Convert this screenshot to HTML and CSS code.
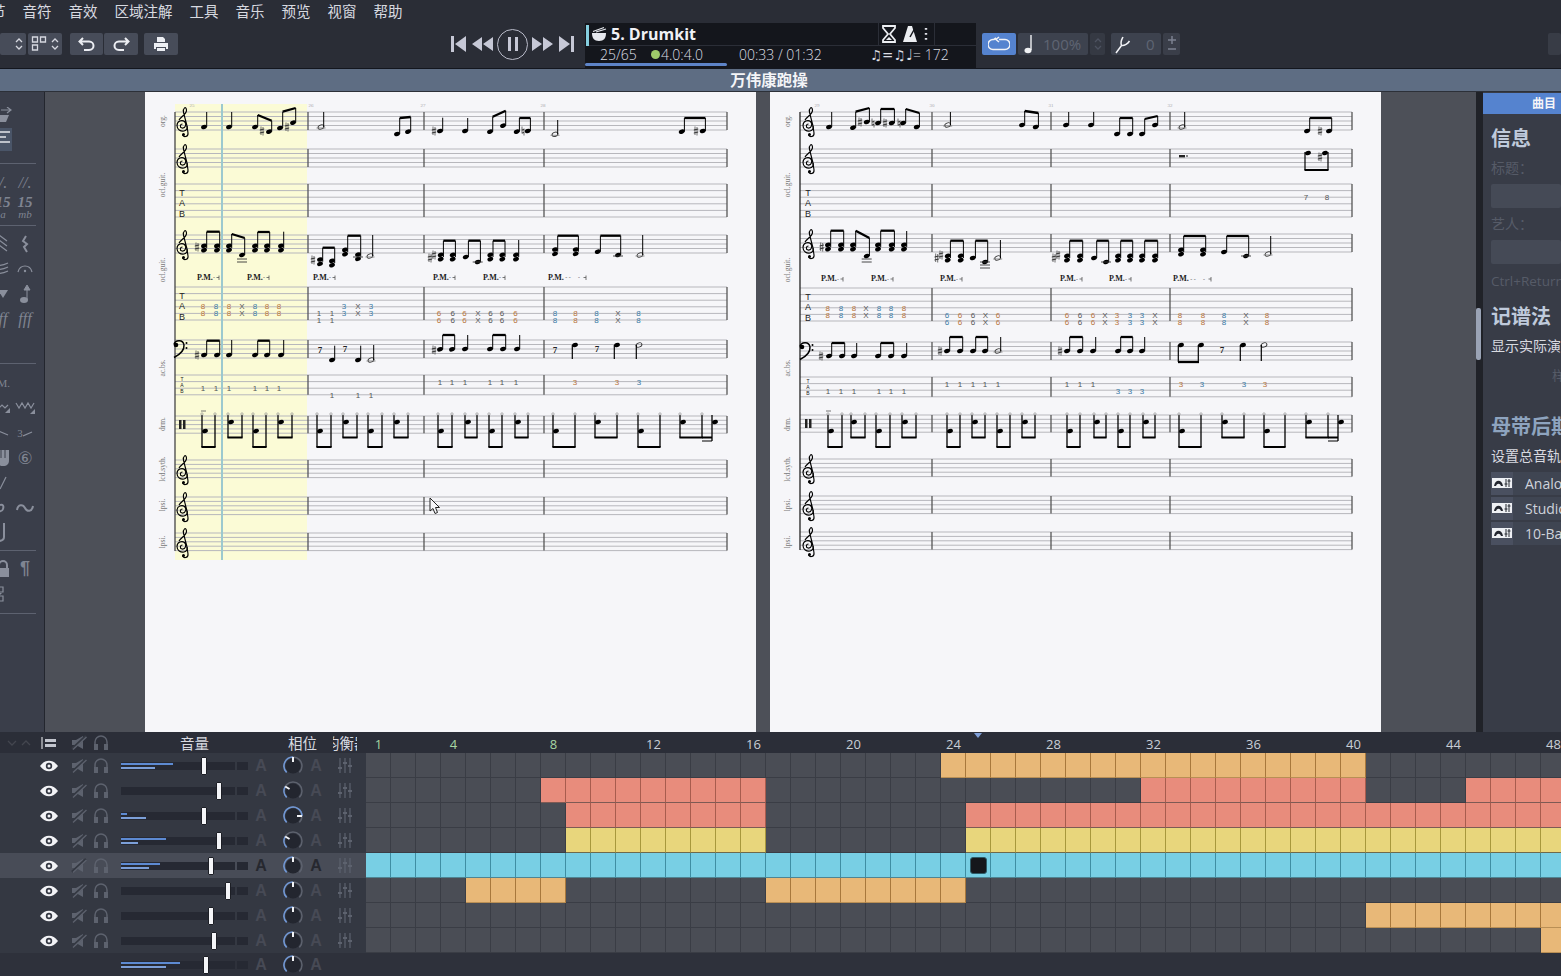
FILE: index.html
```html
<!DOCTYPE html>
<html lang="zh">
<head>
    <meta charset="UTF-8">
    <title>万伟康跑操</title>
    <link rel="stylesheet" href="styles.css">
</head>
<body>
    <nav class="menubar">
        <span>节</span><span>音符</span><span>音效</span><span>区域注解</span><span>工具</span><span>音乐</span><span>预览</span><span>视窗</span><span>帮助</span>
    </nav>

    <header class="toolbar">
        <div class="btn stepper-a">
            <svg width="10" height="16" viewBox="0 0 10 16"><path d="M2 6l3-3 3 3M2 10l3 3 3-3" class="ico-line"/></svg>
        </div>
        <div class="btn stepper-b">
            <svg width="18" height="18" viewBox="0 0 18 18"><path d="M1.5 2h5v5h-5zM9.5 2h5v5h-5zM1.5 10h5v5h-5z" class="ico-line"/></svg>
            <svg width="10" height="16" viewBox="0 0 10 16"><path d="M2 6l3-3 3 3M2 10l3 3 3-3" class="ico-line"/></svg>
        </div>
        <div class="btn-pair">
            <div class="btn undo"><svg width="18" height="16" viewBox="0 0 18 16"><path d="M5 2L1.5 5.5 5 9M2 5.5h9c6 0 6 8.500 0 8.500H6" class="ico-thick"/></svg></div>
            <div class="btn redo"><svg width="18" height="16" viewBox="0 0 18 16"><path d="M13 2l3.500 3.500L13 9M16 5.500H7c-6 0-6 8.500 0 8.500h5" class="ico-thick"/></svg></div>
        </div>
        <div class="btn print">
            <svg width="16" height="16" viewBox="0 0 16 16"><path d="M4 1h6l2 2v3H4zM1 7h14v6h-2v-2H3v2H1zM4 12h8v3H4z" class="ico-fill"/></svg>
        </div>

        <div class="transport">
            <svg width="16" height="18" viewBox="0 0 16 18"><path d="M0 1h3v16H0zM15 1v16L4 9z" class="ico-trans"/></svg>
            <svg width="21" height="18" viewBox="0 0 21 18"><path d="M10 2v14L0 9zM21 2v14L11 9z" class="ico-trans"/></svg>
            <div class="pause"><i></i><i></i></div>
            <svg width="21" height="18" viewBox="0 0 21 18"><path d="M0 2v14l10-7zM11 2v14l10-7z" class="ico-trans"/></svg>
            <svg width="16" height="18" viewBox="0 0 16 18"><path d="M13 1h3v16h-3zM1 1v16l11-8z" class="ico-trans"/></svg>
        </div>

        <div class="lcd">
            <div class="lcd-top">
                <svg class="drum" width="16" height="16" viewBox="0 0 16 16"><path d="M1 7h14c0 5-2 8-7 8s-7-3-7-8z" fill="#e6e8ee"/><path d="M2 5.500l11-4M5 6l10-3" stroke="#e6e8ee" stroke-width="1.200"/></svg>
                <span class="track-name">5. Drumkit</span>
                <div class="lcd-icons">
                    <svg width="14" height="18" viewBox="0 0 14 18"><path d="M1 1h12v2L8 9l5 6v2H1v-2l5-6-5-6z" fill="none" stroke="#eceef2" stroke-width="1.800"/><path d="M4 15l3-3 3 3z" fill="#eceef2"/></svg>
                    <svg width="16" height="18" viewBox="0 0 16 18"><path d="M6 1h4l5 16H1z" fill="#eceef2"/><path d="M8 12L13 3" stroke="#14161c" stroke-width="1.500"/></svg>
                    <svg width="4" height="14" viewBox="0 0 4 14"><path d="M2 1v1.800M2 6v1.800M2 11v1.800" stroke="#dfe1e8" stroke-width="2.400"/></svg>
                </div>
            </div>
            <div class="lcd-bottom">
                <span class="lcd-pos">25/65</span>
                <span class="lcd-dot"></span>
                <span class="lcd-sig">4.0:4.0</span>
                <span class="lcd-time">00:33 / 01:32</span>
                <span class="lcd-swing">♫=♫</span>
                <span class="lcd-tempo"><b>♩</b>= 172</span>
            </div>
            <div class="lcd-progress"></div>
        </div>

        <div class="btn loop">
            <svg width="22" height="16" viewBox="0 0 22 16"><path d="M8 2a6 6 0 0 0-2 1.500H5a5 5 0 0 0 0 10h12a5 5 0 0 0 0-10h-6M11 1L8 3.500 11 6" class="ico-line white"/></svg>
        </div>
        <div class="btn speed">
            <svg width="10" height="20" viewBox="0 0 10 20"><ellipse cx="4" cy="16.500" rx="3.500" ry="2.800" fill="#f0f1f4"/><path d="M7 16V1" stroke="#f0f1f4" stroke-width="1.400"/></svg>
            <span>100%</span>
        </div>
        <div class="btn speed-step">
            <svg width="10" height="14" viewBox="0 0 10 14"><path d="M2 5l3-3 3 3M2 9l3 3 3-3" class="ico-line dim"/></svg>
        </div>
        <div class="btn tune">
            <svg width="18" height="20" viewBox="0 0 18 20"><path d="M1 19l5.500-7.500M6.500 11.500C5 8 7 5 8 3M6.500 11.500c3 .5 6.500-2 8-4.500" class="ico-line white"/></svg>
            <span>0</span>
        </div>
        <div class="btn tune-step">
            <svg width="10" height="18" viewBox="0 0 10 18"><path d="M1 5h8M5 1v8M1 14h8" stroke="#7c8190" stroke-width="1.500"/></svg>
        </div>
        <div class="btn far-right"></div>
    </header>

    <div class="titlebar">万伟康跑操</div>

    <div class="main">
        <aside class="palette">
            <div class="pal-sec first">
                <div class="pal-row"><svg width="20" height="16" viewBox="0 0 20 16"><path d="M8 3h10M14 0l4 3-4 3" class="pal-line"/><path d="M4 8h12l-3 7H6z" fill="#8a8f9c"/></svg><i></i></div>
                <div class="pal-row sel"><svg width="20" height="18" viewBox="0 0 20 18"><path d="M2 4h16M2 9h12M2 14h16" stroke="#e4e6ec" stroke-width="1.500"/></svg></div>
            </div>
            <div class="pal-sec s2">
                <div class="pal-row"><span class="pal-serif">/.</span><span class="pal-serif">//.</span></div>
                <div class="pal-row"><span class="pal-serif bold stack">15<small>a</small></span><span class="pal-serif bold stack">15<small>mb</small></span></div>
            </div>
            <div class="pal-sec s3">
                <div class="pal-row"><svg width="14" height="18" viewBox="0 0 14 18"><path d="M3 0l8 6M3 5l8 6M3 10l8 6M3 0v16" class="pal-line"/></svg><svg width="10" height="18" viewBox="0 0 10 18"><path d="M6 1L3 6l4 3-3 3 3 5" class="pal-line thick"/></svg></div>
                <div class="pal-row"><svg width="14" height="14" viewBox="0 0 14 14"><path d="M0 3c4 1 8 0 12-2M0 7c4 1 8 0 12-2M0 11c4 1 8 0 12-2" class="pal-line"/></svg><svg width="16" height="10" viewBox="0 0 16 10"><path d="M1 8c2-8 12-8 14 0" class="pal-line"/><circle cx="8" cy="7" r="1.200" fill="#8a8f9c"/></svg></div>
                <div class="pal-row"><svg width="12" height="12" viewBox="0 0 12 12"><path d="M1 2h10L6 10z" fill="#8a8f9c"/></svg><svg width="12" height="20" viewBox="0 0 12 20"><ellipse cx="5" cy="16" rx="4" ry="3" fill="#8a8f9c"/><path d="M8 16V4M8 1l3 5H5z" fill="#8a8f9c" stroke="#8a8f9c"/></svg></div>
                <div class="pal-row"><span class="pal-serif ital">ff</span><span class="pal-serif ital">fff</span></div>
            </div>
            <div class="pal-sec s4">
                <div class="pal-row"><span class="pal-serif small">P.M.</span><i></i></div>
                <div class="pal-row"><svg width="14" height="12" viewBox="0 0 14 12"><path d="M0 4l3 2 3-3 3 3 3-3" class="pal-line"/><path d="M14 11l-5 0 5-5z" fill="#8a8f9c"/></svg><svg width="20" height="14" viewBox="0 0 20 14"><path d="M1 2l3 5 3-5 3 5 3-5 3 5 3-5" class="pal-line"/><path d="M20 13h-5l5-5z" fill="#8a8f9c"/></svg></div>
                <div class="pal-row"><svg width="14" height="8" viewBox="0 0 14 8"><path d="M0 1l12 5" class="pal-line"/></svg><span class="pal-three">3<svg width="10" height="6" viewBox="0 0 10 6"><path d="M0 5l9-4" class="pal-line"/></svg></span></div>
                <div class="pal-row"><svg width="14" height="18" viewBox="0 0 14 18"><path d="M1 1h12v10c0 4-2 6-6 6s-6-2-6-6z" fill="#8a8f9c"/><path d="M5 1v8M9 1v8" stroke="#3a3e4a"/></svg><span class="pal-six">⑥</span></div>
                <div class="pal-row"><svg width="10" height="14" viewBox="0 0 10 14"><path d="M8 1L2 13" class="pal-line"/></svg><i></i></div>
                <div class="pal-row"><svg width="14" height="10" viewBox="0 0 14 10"><path d="M1 6c2 3 5 3 6 0s0-5-3-4" class="pal-line thick"/></svg><svg width="18" height="10" viewBox="0 0 18 10"><path d="M1 7c1-6 6-6 8-2s7 4 8-2" class="pal-line thick"/></svg></div>
                <div class="pal-row"><svg width="12" height="22" viewBox="0 0 12 22"><path d="M7 1v14c0 3-3 4-6 4" class="pal-line thick"/></svg><i></i></div>
            </div>
            <div class="pal-sec s5">
                <div class="pal-row"><svg width="14" height="18" viewBox="0 0 14 18"><path d="M3 8V5a4 4 0 0 1 8 0v3" class="pal-line thick"/><path d="M1 8h12v9H1z" fill="#8a8f9c"/></svg><span class="pal-para">¶</span></div>
                <div class="pal-row"><svg width="14" height="16" viewBox="0 0 14 16"><path d="M1 1h6v5H1zM1 10h6v5H1z" class="pal-line"/><path d="M2 7l2 2 2-2z" fill="#8a8f9c"/></svg><i></i></div>
            </div>
        </aside>

        <section class="canvas">
            <div class="page"><svg class="score" id="score1" viewBox="145 92 611 640" width="611" height="640"></svg></div>
            <div class="page"><svg class="score" id="score2" viewBox="770 92 611 640" width="611" height="640"></svg></div>
        </section>

        <div class="vscroll"><div class="vthumb"></div></div>

        <aside class="inspector">
            <div class="tab">曲目</div>
            <h2 class="head-info">信息</h2>
            <div class="lbl dim">标题：</div>
            <div class="field"></div>
            <div class="lbl dim">艺人：</div>
            <div class="field"></div>
            <div class="lbl dim latin">Ctrl+Return</div>
            <h2 class="head-notation">记谱法</h2>
            <div class="lbl">显示实际演奏</div>
            <div class="lbl dim right">样</div>
            <h2 class="head-master">母带后期</h2>
            <div class="lbl">设置总音轨</div>
            <div class="fx-list">
                <div class="fx"><span class="fx-icon"><svg width="20" height="10" viewBox="0 0 20 10"><path d="M0 0h20v10H0z" fill="#eef0f4"/><path d="M2 8c1-7 8-7 9 0h-2c-1-3-4-3-5 0z" fill="#23262f"/><path d="M14 1v8M17 1v8M12.500 6h3M15.500 3h3" stroke="#23262f"/></svg></span><span class="fx-name">Analog</span></div>
                <div class="fx"><span class="fx-icon"><svg width="20" height="10" viewBox="0 0 20 10"><path d="M0 0h20v10H0z" fill="#eef0f4"/><path d="M2 8c1-7 8-7 9 0h-2c-1-3-4-3-5 0z" fill="#23262f"/><path d="M14 1v8M17 1v8M12.500 6h3M15.500 3h3" stroke="#23262f"/></svg></span><span class="fx-name">Studio</span></div>
                <div class="fx"><span class="fx-icon"><svg width="20" height="10" viewBox="0 0 20 10"><path d="M0 0h20v10H0z" fill="#eef0f4"/><path d="M2 8c1-7 8-7 9 0h-2c-1-3-4-3-5 0z" fill="#23262f"/><path d="M14 1v8M17 1v8M12.500 6h3M15.500 3h3" stroke="#23262f"/></svg></span><span class="fx-name">10-Band</span></div>
            </div>
        </aside>
    </div>

    <section class="mixer" id="mixer"></section>

    <script src="script.js"></script>
</body>
</html>
```

FILE: styles.css
```css
* {
    box-sizing: border-box;
}

html, body {
    margin: 0;
    width: 1561px;
    height: 976px;
    overflow: hidden;
}

body {
    display: flex;
    flex-direction: column;
    background: #2a2d36;
    color: #d8dae0;
    font-family: "Noto Sans", "Noto Sans CJK SC", sans-serif;
    font-size: 14px;
}

/* верх */
.menubar {
    height: 22px;
    flex: none;
    display: flex;
    gap: 17px;
    margin-left: -9px;
    font-size: 14.500px;
    line-height: 22px;
    white-space: nowrap;
}

.toolbar {
    height: 46px;
    flex: none;
    display: flex;
    align-items: center;
    padding-bottom: 2px;
    position: relative;
}

.btn {
    height: 22px;
    flex: none;
    display: flex;
    align-items: center;
    justify-content: center;
    background: #474c59;
    border-radius: 2px;
}

.stepper-a { width: 26px; justify-content: flex-end; padding-right: 2px; }
.stepper-b { width: 34px; margin-left: 2px; gap: 1px; }
.btn-pair { display: flex; gap: 1px; margin-left: 8px; }
.undo { width: 33px; }
.redo { width: 34px; }
.print { width: 34px; margin-left: 6px; }

.ico-line { fill: none; stroke: #d6d8e0; stroke-width: 1.300; }
.ico-line.white { stroke: #f2f3f7; stroke-width: 1.500; }
.ico-line.dim { stroke: #4d5260; }
.ico-thick { fill: none; stroke: #eceef3; stroke-width: 2; }
.ico-fill { fill: #eceef3; }
.ico-trans { fill: #c6c8d6; }

.transport {
    display: flex;
    align-items: center;
    gap: 5px;
    margin-left: 273px;
    width: 125px;
    flex: none;
}

.pause {
    width: 31px;
    height: 31px;
    margin: 0 -1px 0 -1px;
    flex: none;
    border: 1.500px solid #b9bbc9;
    border-radius: 50%;
    display: flex;
    align-items: center;
    justify-content: center;
    gap: 4px;
}

.pause i {
    width: 3px;
    height: 14px;
    background: #c6c8d6;
}

.lcd {
    width: 391px;
    height: 45px;
    flex: none;
    margin-left: 9px;
    align-self: flex-end;
    margin-bottom: -2px;
    background: #14161c;
    position: relative;
    border-left: 3px solid #14161c;
}

.lcd::before {
    content: "";
    position: absolute;
    left: -2px;
    top: 2px;
    width: 3px;
    height: 21px;
    background: #86cfe0;
}

.lcd-top {
    height: 23px;
    display: flex;
    align-items: center;
    border-bottom: 1px solid #2b2e37;
    padding-left: 3px;
}

.track-name {
    margin-left: 4px;
    font-family: "Open Sans", sans-serif;
    font-weight: 700;
    font-size: 16px;
    color: #f0f1f5;
    width: 262px;
}

.lcd-icons {
    height: 100%;
    width: 57px;
    padding: 0 4px 0 3px;
    margin-left: 5px;
    display: flex;
    align-items: center;
    gap: 6px;
    border-left: 1px solid #2b2e37;
    border-right: 1px solid #2b2e37;
}

.lcd-bottom {
    height: 22px;
    display: flex;
    align-items: center;
    padding-left: 12px;
    padding-bottom: 5px;
    font-family: "Open Sans", sans-serif;
    font-size: 14px;
    font-weight: 300;
    color: #dcdee4;
    white-space: nowrap;
}

.lcd-pos { width: 51px; flex: none; }
.lcd-dot { width: 9px; height: 9px; flex: none; border-radius: 50%; background: #9fca6a; margin-right: 1px; }
.lcd-sig { width: 78px; flex: none; }
.lcd-time { width: 131px; flex: none; }
.lcd-swing { width: 36px; flex: none; font-family: "DejaVu Sans", sans-serif; font-size: 13.500px; font-weight: 400; }
.lcd-tempo b { font-family: "DejaVu Sans", sans-serif; font-weight: 400; font-size: 15px; }

.lcd-progress {
    position: absolute;
    left: -3px;
    bottom: 2px;
    width: 142px;
    height: 3px;
    background: #5e84c8;
    border-radius: 2px;
}

.loop { width: 34px; margin-left: 6px; background: #5583cf; }

.speed {
    width: 70px;
    margin-left: 2px;
    justify-content: flex-start;
    gap: 9px;
    padding-left: 6px;
    background: #3d424e;
    color: #5f6573;
    font-size: 15px;
    font-family: "Open Sans", sans-serif;
}

.speed-step { width: 15px; margin-left: 2px; background: #353943; }

.tune {
    width: 50px;
    margin-left: 6px;
    justify-content: flex-start;
    gap: 13px;
    padding-left: 4px;
    background: #3d424e;
    color: #5f6573;
    font-size: 15px;
    font-family: "Open Sans", sans-serif;
}

.tune-step {
    width: 17px;
    margin-left: 2px;
    background: #3a3e49;
}

.far-right {
    width: 13px;
    margin-left: auto;
    background: #383c46;
}

.titlebar {
    height: 24px;
    flex: none;
    border-top: 1px solid #13161e;
    background: #5e6d83;
    color: #f4f5f8;
    text-align: center;
    font-weight: 700;
    font-size: 15.500px;
    line-height: 22px;
    padding-right: 23px;
    border-bottom: 1px solid #2c3038;
}

/* середина */
.main {
    height: 640px;
    flex: none;
    display: flex;
    background: #4d5058;
}

.palette {
    width: 45px;
    flex: none;
    overflow: hidden;
    background: #3a3e4a;
    border-right: 1px solid #23262e;
    color: #7f8491;
}

.pal-sec {
    width: 36px;
    border-bottom: 1px solid #5d6270;
}

.pal-sec.first { height: 72px; padding-top: 10px; }
.pal-sec.s2 { height: 62px; padding-top: 6px; }
.pal-sec.s3 { height: 138px; padding-top: 5px; }
.pal-sec.s4 { height: 187px; padding-top: 6px; }
.pal-sec.s5 { height: 63px; padding-top: 5px; }

.pal-row {
    height: 25px;
    display: grid;
    grid-template-columns: 22px 22px;
    margin-left: -8px;
    align-items: center;
    justify-items: center;
    width: 44px;
}

.pal-row.sel {
    width: 20px;
    height: 23px;
    margin: 1px 0 0 -8px;
    display: block;
    background: #4a5568;
    overflow: hidden;
}

.pal-line { fill: none; stroke: #8a8f9c; stroke-width: 1.200; }
.pal-line.thick { stroke-width: 2; }

.pal-serif {
    font-family: "Liberation Serif", serif;
    font-size: 16px;
    font-style: italic;
    font-weight: 400;
    white-space: nowrap;
}

.pal-serif.bold { font-weight: 700; }

.pal-serif.stack {
    font-size: 15px;
    line-height: 13px;
    text-align: center;
}

.pal-serif.stack small {
    display: block;
    font-size: 11px;
    font-weight: 400;
    line-height: 10px;
}

.pal-serif.small { font-size: 11px; font-style: normal; margin-left: -6px; }
.pal-three { font-family: "Liberation Serif", serif; font-size: 11px; white-space: nowrap; }
.pal-six { font-family: "DejaVu Sans", sans-serif; font-size: 17px; }
.pal-para { font-family: "Liberation Sans", sans-serif; font-weight: 700; font-size: 18px; }

.canvas {
    width: 1431px;
    flex: none;
    display: flex;
    gap: 14px;
    padding-left: 100px;
    overflow: hidden;
}

.page {
    width: 611px;
    height: 640px;
    background: #f6f6f9;
    flex: none;
}

.score {
    display: block;
    font-family: "Liberation Serif", serif;
}

.vscroll {
    width: 7px;
    flex: none;
    background: #202228;
    padding-top: 216px;
}

.vthumb {
    width: 5px;
    height: 52px;
    background: #9aa3b5;
    border-radius: 2px;
}

.inspector {
    flex: 1;
    min-width: 0;
    background: #383c47;
    overflow: hidden;
    white-space: nowrap;
    padding-top: 1px;
    padding-left: 8px;
}

.tab {
    height: 21px;
    margin-left: -8px;
    padding-left: 49px;
    background: #5583cf;
    color: #f4f5f8;
    font-size: 12px;
    font-weight: 700;
    line-height: 21px;
}

.inspector h2 {
    margin: 0;
    font-weight: 700;
    font-size: 20px;
    line-height: 26px;
}

.inspector .head-info { color: #bfcadb; padding-top: 12px; height: 38px; }
.inspector .head-notation { color: #bfcadb; margin-top: 13px; }
.inspector .head-master { color: #8ea4bf; margin-top: 29px; }

.lbl { font-size: 14px; line-height: 20px; color: #d8dae0; margin-top: 6px; }
.lbl.dim { color: #565b67; }
.lbl.latin { margin-top: 7px; font-family: "Open Sans", sans-serif; font-size: 13.500px; }
.lbl.right { margin-top: 9px; padding-left: 61px; font-size: 13px; }

.field {
    height: 24px;
    margin-top: 6px;
    background: #454a56;
    border-radius: 2px;
}

.fx-list {
    display: flex;
    flex-direction: column;
    gap: 2px;
    margin-top: 6px;
}

.fx {
    height: 23px;
    display: flex;
    background: #3f4552;
}

.fx-icon {
    width: 22px;
    flex: none;
    margin-right: 2px;
    padding: 6px 1px;
    background: #4a5060;
}

.fx-icon svg { display: block; }

.fx-name {
    padding-left: 10px;
    font-family: "Open Sans", sans-serif;
    line-height: 23px;
    color: #cfd3db;
}

/* низ */
.mixer {
    height: 244px;
    flex: none;
    background: #343842;
}

.mix-row {
    display: flex;
    height: 25px;
}

.mix-row.header {
    height: 21px;
    background: #2b2e38;
}

.mix-row.active .track-head { background: #484c57; }
.mix-row.active .letter { color: #26282f; }
.mix-row.master { background: #2e313b; height: 23px; }

.track-head {
    width: 366px;
    flex: none;
    display: flex;
    align-items: center;
    padding-left: 39px;
}

.track-head svg { display: block; flex: none; margin: 0 auto; }

.eye { width: 20px; margin-right: 10px; }
.mute { width: 20px; margin-right: 2px; }
.phones { width: 20px; margin-right: 10px; }

.fader {
    width: 127px;
    height: 8px;
    position: relative;
    background: linear-gradient(to right, #262933 114px, transparent 114px, transparent 116px, #262933 116px);
}

.meter {
    position: absolute;
    left: 0;
    height: 2px;
    background: #5d8ad2;
}

.meter.top { top: 1px; }
.meter.bottom { top: 5px; background: #7c9fd8; }

.thumb {
    position: absolute;
    top: -5px;
    width: 6px;
    height: 18px;
    margin-left: -3px;
    background: #f4f5f8;
    border: 1px solid #1d1f26;
    border-radius: 1px;
}

.letter {
    width: 20px;
    text-align: center;
    font-family: "Liberation Sans", sans-serif;
    font-weight: 700;
    font-size: 16px;
    color: #474a55;
}

.letter.a1 { margin: 0 12px 0 3px; }
.letter.a2 { margin: 0 9px 0 3px; }

.knob { width: 20px; }
.sliders { width: 20px; }

.hdr-chev { width: 36px; margin-left: -38px; margin-right: 2px; }
.hdr-tree { width: 20px; margin-right: 10px; }
.hdr-vol { width: 127px; text-align: center; margin-right: 40px; padding-left: 20px; font-size: 14.500px; }
.hdr-pan { width: 29px; white-space: nowrap; font-size: 14.500px; }
.hdr-eq {
    width: 24px;
    margin-left: 16px;
    overflow: hidden;
    white-space: nowrap;
    text-indent: -8px;
    font-size: 14.500px;
}

.track-grid {
    display: flex;
    flex: none;
}

.cell {
    width: 25px;
    height: 25px;
    flex: none;
    background: #4a4d55;
    border-right: 1px solid #3a3d45;
    border-bottom: 1px solid #3a3d45;
    display: flex;
    align-items: center;
    justify-content: center;
}

.cell.orange { background: #e8b878; border-right-color: #a8783c; border-bottom-color: #b98f55; }
.cell.salmon { background: #e88c7c; border-right-color: #a85c4e; border-bottom-color: #7e5a54; }
.cell.yellow { background: #e8d67c; border-right-color: #a8983c; border-bottom-color: #6e6a4c; }
.cell.cyan { background: #78cfe4; border-right-color: #3f8ea3; border-bottom-color: #4e8492; }

.play-pos {
    width: 17px;
    height: 17px;
    background: #15171b;
    border-radius: 3px;
    border: 1px solid #2d5c68;
}

.ruler-cell {
    width: 25px;
    height: 21px;
    flex: none;
    text-align: center;
    line-height: 24px;
    color: #c9ced6;
    font-family: "Open Sans", sans-serif;
    font-size: 13px;
    white-space: nowrap;
    position: relative;
}

.ruler-cell.green { color: #a7d6a3; }

.ruler-cell.marker::after {
    content: "";
    position: absolute;
    left: 8px;
    top: 1px;
    border: 4px solid transparent;
    border-top: 5px solid #7f9fd8;
}
```

FILE: script.js
```javascript
// Микшер и партитура собираются здесь: данных слишком много для разметки руками

// --- микшер ---
const eyeIcon = '<svg width="20" height="12" viewBox="0 0 20 12"><path d="M1 6c5-7 13-7 18 0-5 7-13 7-18 0z" fill="#f2f3f6"/><circle cx="10" cy="6" r="3.200" fill="#343842"/><circle cx="10" cy="6" r="1.500" fill="#f2f3f6"/></svg>';
const muteIcon = '<svg width="16" height="15" viewBox="0 0 16 15"><path d="M1 5h4l7-4v13l-7-4H1z" fill="#5d626e"/><path d="M1 14L15 1" stroke="#343842" stroke-width="2.400"/><path d="M2 14.500L15.500 2" stroke="#5d626e" stroke-width="1.300"/></svg>';
const phonesIcon = '<svg width="16" height="15" viewBox="0 0 16 15"><path d="M2 10V7a6 6 0 0 1 12 0v3" fill="none" stroke="#5d626e" stroke-width="1.500"/><path d="M1 9h4v6H1zM11 9h4v6h-4z" fill="#5d626e"/></svg>';
const slidersIcon = '<svg width="16" height="15" viewBox="0 0 16 15"><path d="M3 0v15M8 0v15M13 0v15" stroke="#5d626e" stroke-width="1.200"/><path d="M1 9h4v2H1zM6 4h4v2H6zM11 7h4v2h-4z" fill="#5d626e"/></svg>';

function knobIcon(deg) {
    // deg: угол указателя, 0 = вверх
    const rad = (a) => (a - 90) * Math.PI / 180;
    const pt = (a, r) => [10 + r * Math.cos(rad(a)), 10 + r * Math.sin(rad(a))];
    const arc = (a, b, r) => {
        const p = pt(a, r), q = pt(b, r);
        const large = b - a > 180 ? 1 : 0;
        return `M${p[0]} ${p[1]}A${r} ${r} 0 ${large} 1 ${q[0]} ${q[1]}`;
    };
    const t1 = pt(deg, 9), t2 = pt(deg, 4);
    return `<svg width="20" height="20" viewBox="0 0 20 20"><circle cx="10" cy="10" r="7.500" fill="#23262f"/>` +
        `<path d="${arc(-135, 135, 9)}" fill="none" stroke="#5d626e" stroke-width="1.500"/>` +
        `<path d="${arc(-135, deg, 9)}" fill="none" stroke="#6f97d6" stroke-width="1.500"/>` +
        `<path d="M${t1[0]} ${t1[1]}L${t2[0]} ${t2[1]}" stroke="#f2f3f6" stroke-width="2"/></svg>`;
}

const tracks = [
    { fader: 83, knob: 0, meter: [52, 34], cells: [[24, 40, 'orange']] },
    { fader: 98, knob: -60, meter: null, cells: [[8, 16, 'salmon'], [32, 40, 'salmon'], [45, 48, 'salmon']] },
    { fader: 83, knob: 90, meter: [6, 25], cells: [[9, 16, 'salmon'], [25, 48, 'salmon']] },
    { fader: 98, knob: -60, meter: [45, 17], cells: [[9, 16, 'yellow'], [25, 48, 'yellow']] },
    { fader: 90, knob: 0, meter: [39, 28], cells: [[1, 48, 'cyan']], active: true },
    { fader: 107, knob: 0, meter: null, cells: [[5, 8, 'orange'], [17, 24, 'orange']] },
    { fader: 90, knob: 0, meter: null, cells: [[41, 48, 'orange']] },
    { fader: 93, knob: 0, meter: null, cells: [[48, 48, 'orange']] }
];

function faderHtml(pos, meter) {
    let html = '<div class="fader">';
    if (meter) {
        html += `<div class="meter top" style="width:${meter[0]}px"></div><div class="meter bottom" style="width:${meter[1]}px"></div>`;
    }
    return html + `<div class="thumb" style="left:${pos}px"></div></div>`;
}

function buildMixer() {
    let html = '<div class="mix-row header"><div class="track-head">' +
        '<div class="hdr-chev"><svg width="30" height="8" viewBox="0 0 30 8"><path d="M4 2l4 4 4-4M18 6l4-4 4 4" fill="none" stroke="#43464f" stroke-width="1.300"/></svg></div>' +
        '<div class="hdr-tree"><svg width="16" height="14" viewBox="0 0 16 14"><path d="M1 1v12" stroke="#f2f3f6"/><path d="M4 3h11v3H4zM4 8h11v3H4z" fill="#c2c5cd"/></svg></div>' +
        `<div class="mute">${muteIcon}</div><div class="phones">${phonesIcon}</div>` +
        '<div class="hdr-vol">音量</div><div class="hdr-pan">相位</div><div class="hdr-eq">均衡器</div></div><div class="track-grid">';
    for (let n = 1; n <= 48; n++) {
        const show = n === 1 || n % 4 === 0;
        html += `<div class="ruler-cell${n <= 8 ? ' green' : ''}${n === 25 ? ' marker' : ''}">${show ? n : ''}</div>`;
    }
    html += '</div></div>';

    tracks.forEach((t) => {
        html += `<div class="mix-row${t.active ? ' active' : ''}"><div class="track-head">` +
            `<div class="eye">${eyeIcon}</div><div class="mute">${muteIcon}</div><div class="phones">${phonesIcon}</div>` +
            faderHtml(t.fader, t.meter) +
            `<div class="letter a1">A</div><div class="knob">${knobIcon(t.knob)}</div><div class="letter a2">A</div>` +
            `<div class="sliders">${slidersIcon}</div></div><div class="track-grid">`;
        for (let n = 1; n <= 48; n++) {
            const hit = t.cells.find((c) => n >= c[0] && n <= c[1]);
            const inner = t.active && n === 25 ? '<div class="play-pos"></div>' : '';
            html += `<div class="cell${hit ? ' ' + hit[2] : ''}">${inner}</div>`;
        }
        html += '</div></div>';
    });

    html += '<div class="mix-row master"><div class="track-head"><div class="eye"></div><div class="mute"></div><div class="phones"></div>' +
        faderHtml(85, [59, 45]) +
        `<div class="letter a1">A</div><div class="knob">${knobIcon(0)}</div><div class="letter a2">A</div></div></div>`;
    document.getElementById('mixer').innerHTML = html;
}

// --- партитура ---
let svg = '';

function line(x1, y1, x2, y2, w, c) {
    svg += `<line x1="${x1}" y1="${y1}" x2="${x2}" y2="${y2}" stroke="${c || '#000'}" stroke-width="${w || 1}"/>`;
}

function txt(x, y, s, size, fill, extra) {
    svg += `<text x="${x}" y="${y}" font-size="${size}" fill="${fill || '#000'}" text-anchor="middle" ${extra || ''}>${s}</text>`;
}

function head(x, y, hollow) {
    svg += `<ellipse cx="${x}" cy="${y}" rx="3" ry="2.100" transform="rotate(-22 ${x} ${y})" ` +
        (hollow ? 'fill="none" stroke="#333" stroke-width="0.900"' : 'fill="#000"') + '/>';
}

// нота вверх, top - конец штиля
function q(x, y, top, chord) {
    if (chord) { head(x, y - 2.200); head(x, y + 2.200); } else head(x, y);
    line(x + 2.700, y, x + 2.700, top, 1);
}

function hq(x, y, top) {
    head(x, y, true);
    line(x + 2.700, y, x + 2.700, top, 1);
    line(x - 4.500, y + 1, x + 4.500, y + 1, 0.800, '#777');
}

// нота вниз
function d(x, y, bottom, hollow) {
    head(x, y, hollow);
    line(x - 2.700, y, x - 2.700, bottom, 1.200);
}

// пара под ребром
function b(x1, y1, x2, y2, t1, t2, chord) {
    if (t2 === undefined) t2 = t1;
    q(x1, y1, t1, chord);
    q(x2, y2, t2, chord);
    line(x1 + 2.700, t1, x2 + 2.700, t2, 2.300);
}

function sharp(x, y) {
    line(x - 1, y - 4.500, x - 1, y + 4, 0.700, '#333');
    line(x + 1, y - 4, x + 1, y + 4.500, 0.700, '#333');
    line(x - 2.200, y - 1, x + 2.200, y - 2, 1, '#333');
    line(x - 2.200, y + 2, x + 2.200, y + 1, 1, '#333');
}

function natural(x, y) {
    line(x - 1, y - 4.500, x - 1, y + 2.500, 0.700, '#333');
    line(x + 1, y - 2.500, x + 1, y + 4.500, 0.700, '#333');
    line(x - 1, y - 1, x + 1, y - 1.500, 1, '#333');
    line(x - 1, y + 2, x + 1, y + 1.500, 1, '#333');
}

function rest(x, y) { txt(x, y + 3, '7', 9, '#222', 'font-weight="700"'); }

function ledger(x, y) { line(x - 5, y, x + 5, y, 0.900, '#333'); }

function staff(x0, x1, y, n, gap, bars) {
    for (let i = 0; i < n; i++) line(x0, y + i * gap, x1, y + i * gap, 1, '#b7b7bc');
    bars.concat([x1]).forEach((bx) => line(bx, y, bx, y + (n - 1) * gap, 1.300, '#555'));
}

function treble(x, y) {
    svg += `<g transform="translate(${x - 6} ${y - 5})" fill="none" stroke="#000" stroke-width="1.150">` +
        '<path d="M6.500 17C4 17 3.500 20.500 6 21c3.500.5 5-4 2.500-6.500C6 12.500 1 14 1 18.500c0 4 3.500 6 7 5.500 3-.5 3.500-3 3-5L7.500 5.500C6.800 1 10-1.500 10.500 3 11 7 4.500 10 3 13"/>' +
        '<path d="M11 19l1 7c.5 4-5 5-5.500 1.500"/><circle cx="7.500" cy="27.500" r="1.500" fill="#000" stroke="none"/></g>';
}

function bass(x, y) {
    svg += `<g transform="translate(${x - 7} ${y})"><circle cx="3" cy="5" r="2.300"/><path d="M1 4.500C2 0 10-1 11 5c.5 6-5 10-10 12.500" fill="none" stroke="#000" stroke-width="1.500"/><circle cx="13.500" cy="3" r="1"/><circle cx="13.500" cy="8" r="1"/></g>`;
}

// буквы TAB столбиком
function tabClef(x, y, size, gap) {
    ['T', 'A', 'B'].forEach((ch, i) => txt(x, y + i * gap, ch, size, '#222', 'font-family="Liberation Sans"'));
}

function label(x, y, s) {
    svg += `<text transform="rotate(-90 ${x} ${y})" x="${x}" y="${y}" font-size="7.500" fill="#777" text-anchor="middle">${s}</text>`;
}

function pm(x, y, dashes) {
    svg += `<text x="${x}" y="${y}" font-size="8" font-weight="700" fill="#222">P.M.</text>`;
    const w = 15;
    txt(x + w + 2 + (dashes ? 14 : 0), y - 0.500, '-', 6, '#555');
    if (dashes) txt(x + w + 5, y - 0.500, '- -', 6, '#555');
    const hx = x + w + (dashes ? 23 : 7);
    line(hx, y - 4, hx, y + 0.500, 0.800, '#555');
    line(hx - 2.500, y - 2, hx, y - 2, 0.800, '#555');
}

const ORG = '#b8743a', BLU = '#3a7aa5', GRY = '#555';

function nums(y, list) {
    // list: [x, цифра, цвет]
    list.forEach((n) => txt(n[0], y + 2.800, n[1], 8, n[2] || GRY, 'font-family="Liberation Sans"'));
}

function drumGroup(x1, x2, by, ny) {
    [x1, x2].forEach((x) => {
        line(x, 415, x, by, 1.300);
        svg += `<circle cx="${x}" cy="414" r="1.200" fill="none" stroke="#888" stroke-width="0.600"/>`;
    });
    line(x1 - 0.600, by, x2 + 0.600, by, 2);
    head(x1 + 3, ny);
}

function drumBar(pairs) {
    pairs.forEach((p, i) => {
        if (i % 2 === 0) drumGroup(p[0], p[1], 447, 431);
        else drumGroup(p[0], p[1], 437.500, 422);
    });
}

function labelsAndMarks(lx, ys, names) {
    names.forEach((n, i) => label(lx, ys[i], n));
}

function measureNumbers(list, y) {
    list.forEach((m) => txt(m[0], y, m[1], 5, '#a8a8ac'));
}

function page1() {
    svg = '';
    // уже сыгранный кусок и курсор
    svg += '<rect x="175" y="104" width="132" height="456" fill="#fbfbd6"/>';
    const bars = [308, 424, 544];
    const x0 = 175, x1 = 727;
    staff(x0, x1, 112, 5, 4.500, bars);
    staff(x0, x1, 149, 5, 4.500, bars);
    staff(x0, x1, 184, 6, 6.600, bars);
    staff(x0, x1, 235, 5, 4.500, bars);
    staff(x0, x1, 287, 6, 6.600, bars);
    staff(x0, x1, 340, 5, 4.500, bars);
    staff(x0, x1, 375, 4, 6.600, bars);
    staff(x0, x1, 416, 5, 4.300, bars);
    staff(x0, x1, 460, 5, 4.400, bars);
    staff(x0, x1, 497, 5, 4.400, bars);
    staff(x0, x1, 533, 5, 4.400, bars);
    line(x0, 112, x0, 551, 1.300, '#444');

    treble(182, 112);
    treble(182, 149);
    tabClef(182, 196, 9, 10.400);
    treble(182, 235);
    tabClef(182, 299, 9, 10.400);
    bass(180, 340);
    tabClef(182, 381, 5, 5.800);
    svg += '<rect x="179" y="420" width="2.500" height="9" fill="#222"/><rect x="183" y="420" width="2.500" height="9" fill="#222"/>';
    treble(182, 460);
    treble(182, 497);
    treble(182, 533);

    labelsAndMarks(165, [121, 185, 270, 368, 424, 469, 505, 542],
        ['org.', 'ocl.guit.', 'ocl.guit.', 'ac.bs.', 'drm.', 'lcd.syth.', 'lpsi.', 'lpsi.']);
    measureNumbers([[192, '25'], [311, '26'], [423, '27'], [543, '28']], 107);

    // орган
    q(204, 127, 112);
    q(229, 127, 112);
    b(255, 127, 269, 131.700, 115, 120.700);
    sharp(262, 131);
    b(280, 128, 293, 122.700, 111.700, 108);
    sharp(287, 127);
    hq(321, 127, 112);
    b(397, 134, 408, 131.700, 118, 117);
    sharp(434, 131);
    q(440, 131, 117.700);
    q(465, 131, 118);
    b(490, 131.700, 503, 125.700, 116.700, 110.700);
    b(516.700, 131.700, 527.700, 131, 118);
    natural(523, 131);
    hq(555, 134.300, 120);
    b(681.700, 131.700, 702.700, 131, 118);
    sharp(696, 131);

    // гитара
    sharp(197, 247);
    b(204, 248, 217, 248, 231.700, undefined, true);
    q(229, 248, 234, true);
    q(242, 255, 238);
    line(231.700, 234, 244.700, 238, 2.300);
    ledger(242, 259);
    ledger(242, 262);
    b(255, 248, 267, 248, 232, undefined, true);
    q(281, 248, 231.700, true);

    sharp(313, 260);
    b(320, 261.700, 332, 263, 247.700, undefined, true);
    b(345, 252, 358, 256.700, 235.700, undefined, true);
    ledger(358, 257);
    hq(370, 256, 235);

    sharp(430, 258);
    sharp(434, 255);
    b(440.700, 257, 452.700, 257, 240.700, undefined, true);
    b(465.700, 257, 477.700, 262, 240.700);
    ledger(477.700, 262);
    b(490.300, 257, 502.300, 257, 240.700, undefined, true);
    q(516, 257, 240, true);

    b(555, 251.700, 575.700, 251.700, 235.700, undefined, true);
    b(597.700, 251.700, 618, 255, 235.700);
    ledger(618, 256);
    hq(640, 255, 235);

    [197, 247, 313, 433, 483].forEach((x) => pm(x, 279.500));
    pm(548, 279.500, true);

    nums(306, [[203, 8, ORG], [216, 8, BLU], [229, 8, ORG], [242, 'X'], [255, 8, BLU], [267, 8, ORG], [279, 8, ORG]]);
    nums(312.700, [[203, 8, ORG], [216, 8, BLU], [229, 8, ORG], [242, 'X'], [255, 8, BLU], [267, 8, ORG], [279, 8, ORG]]);
    nums(306, [[344, 3, BLU], [358, 'X'], [371, 3, BLU]]);
    nums(312.700, [[319, 1], [332, 1], [344, 3, BLU], [358, 'X'], [371, 3, BLU]]);
    nums(320, [[319, 1], [332, 1]]);
    const six = [[439, 6, ORG], [452.700, 6], [464.500, 6, ORG], [478, 'X'], [490.500, 6], [502, 6], [515.500, 6, ORG]];
    nums(312.700, six);
    nums(320, six);
    const eight = [[555, 8, BLU], [575.500, 8, ORG], [596.500, 8, BLU], [618, 'X'], [638.500, 8, BLU]];
    nums(312.700, eight);
    nums(320, eight);

    // бас
    sharp(197, 355);
    b(204, 355, 217, 355, 340.700);
    q(229, 355, 340);
    b(255, 355, 267, 355, 340.700);
    q(281, 355, 340);

    rest(320, 350);
    q(332, 360, 345.700);
    rest(345, 349);
    q(358, 360, 345.700);
    hq(371, 360, 345);

    sharp(434, 350);
    b(440, 349.300, 452, 349.300, 335);
    q(465, 349, 335);
    b(490, 349, 503, 349, 335);
    q(517, 349, 335);

    rest(555, 350);
    d(575, 345, 359);
    rest(597, 349);
    d(617, 345, 359);
    d(639, 345, 359, true);

    nums(388, [[203, 1], [216, 1], [229, 1], [255, 1], [267, 1], [279, 1]]);
    nums(395, [[332, 1], [358, 1], [371, 1]]);
    nums(381.700, [[440, 1], [452, 1], [465, 1], [490, 1], [502, 1], [516, 1]]);
    nums(381.700, [[575, 3, ORG], [617, 3, ORG], [639, 3, BLU]]);

    // ударные
    drumBar([[202, 215], [228, 242], [253, 266], [278, 292]]);
    drumBar([[317, 331], [343, 357], [368, 382], [394, 408]]);
    drumBar([[438, 452], [465, 477], [489, 502], [515, 528]]);
    drumBar([[553, 575], [595, 617], [638, 660], [680, 702]]);
    line(702, 441, 712, 441, 1);
    line(702, 437.500, 712, 437.500, 2);
    line(712, 415, 712, 441, 1.300);
    head(715, 422);
    line(201, 411, 206, 411, 0.800, '#555');

    // курсор мыши
    svg += '<path d="M430 498v13l3-2.500 2 5 2.500-1-2-5h4z" fill="#f6f6f9" stroke="#222" stroke-width="1"/>';

    svg += '<rect x="221" y="104" width="2" height="456" fill="#9cc9cf"/>';
    document.getElementById('score1').innerHTML = svg;
}

function page2() {
    svg = '';
    const bars = [932, 1051, 1170];
    const x0 = 800, x1 = 1352;
    staff(x0, x1, 112, 5, 4.500, bars);
    staff(x0, x1, 149, 5, 4.500, bars);
    staff(x0, x1, 184, 6, 6.600, bars);
    staff(x0, x1, 234, 5, 4.500, bars);
    staff(x0, x1, 288, 6, 6.600, bars);
    staff(x0, x1, 342, 5, 4.500, bars);
    staff(x0, x1, 377, 4, 6.600, bars);
    staff(x0, x1, 415, 5, 4.300, bars);
    staff(x0, x1, 459, 5, 4.400, bars);
    staff(x0, x1, 496, 5, 4.400, bars);
    staff(x0, x1, 532, 5, 4.400, bars);
    line(x0, 112, x0, 550, 1.300, '#222');

    treble(808, 112);
    treble(808, 149);
    tabClef(808, 196, 9, 10.400);
    treble(808, 234);
    tabClef(808, 300, 9, 10.400);
    bass(806, 342);
    tabClef(808, 383, 5, 5.800);
    svg += '<rect x="805" y="419" width="2.500" height="9" fill="#222"/><rect x="809" y="419" width="2.500" height="9" fill="#222"/>';
    treble(808, 459);
    treble(808, 496);
    treble(808, 532);

    labelsAndMarks(790, [121, 185, 270, 368, 424, 469, 505, 542],
        ['org.', 'ocl.guit.', 'ocl.guit.', 'ac.bs.', 'drm.', 'lcd.syth.', 'lpsi.', 'lpsi.']);
    measureNumbers([[817, '29'], [932, '30'], [1051, '31'], [1170, '32']], 107);

    // орган
    q(829, 127, 112);
    b(853, 127.700, 866.700, 122, 111.700, 108);
    sharp(860, 122);
    b(878, 123, 891.700, 123, 109);
    natural(873, 123);
    sharp(885, 123);
    b(903, 123, 916.700, 127, 109, 113);
    natural(899, 123);
    hq(947.700, 125, 112);
    b(1022, 125, 1035.700, 127, 111, 113);
    q(1066, 125, 112);
    q(1091, 125, 112);
    b(1117, 134, 1130, 134, 118);
    b(1142, 134, 1155, 125, 119, 116);
    hq(1182, 127, 112);
    b(1307, 131, 1329, 131, 118);
    sharp(1320, 131);

    // вторая гитара, такт 32
    svg += '<rect x="1179" y="155" width="6" height="2.400" fill="#222"/><circle cx="1187" cy="156" r="0.800"/>';
    line(1305, 152, 1305, 170, 1.200);
    line(1328, 152, 1328, 170, 1.200);
    line(1304.500, 170, 1328.500, 170, 2);
    head(1308, 153);
    head(1325, 153);
    sharp(1320, 157);
    nums(197, [[1306, 7], [1327, 8]]);

    // гитара
    sharp(821.700, 247);
    b(828, 247, 841, 247, 230.700, undefined, true);
    q(853, 247, 230.700, true);
    q(866.700, 256, 238);
    line(855.700, 230.700, 869.400, 238, 2.300);
    ledger(866.700, 259);
    ledger(866.700, 262);
    b(878, 247, 891.700, 247, 230.700, undefined, true);
    q(904, 247, 231, true);

    sharp(936.700, 258);
    sharp(941, 255);
    b(947.700, 258, 960.700, 258, 240.700, undefined, true);
    b(972.700, 258, 985, 262, 240.700);
    ledger(985, 262);
    ledger(985, 265);
    ledger(985, 268);
    hq(997.700, 258, 240);

    sharp(1054, 258);
    sharp(1058, 255);
    b(1067, 258, 1080, 258, 240.700, undefined, true);
    b(1094, 258, 1106, 262, 240.700);
    ledger(1106, 262);
    b(1118, 258, 1130, 258, 240.700, undefined, true);
    b(1142, 258, 1155, 258, 240.700, undefined, true);

    b(1181, 252, 1203, 252, 236, undefined, true);
    b(1224, 252, 1246, 256, 236);
    ledger(1246, 256);
    hq(1268, 254, 236);

    [821, 871, 940, 1060, 1109].forEach((x) => pm(x, 281));
    pm(1173, 281, true);

    const m1 = [[827.700, 8, ORG], [841, 8, BLU], [854, 8, ORG], [866, 'X'], [879, 8, BLU], [891, 8, BLU], [904, 8, ORG]];
    nums(308.300, m1);
    nums(315, m1);
    const m2 = [[947, 6, BLU], [960, 6, ORG], [973, 6, GRY], [985.500, 'X'], [998, 6, ORG]];
    nums(315, m2);
    nums(321.700, m2);
    const m3 = [[1067, 6, ORG], [1080, 6, GRY], [1093, 6, ORG], [1105, 'X'], [1117, 3, ORG], [1130, 3, BLU], [1142, 3, BLU], [1155, 'X']];
    nums(315, m3);
    nums(321.700, m3);
    const m4 = [[1180, 8, ORG], [1203, 8, ORG], [1224, 8, BLU], [1246, 'X'], [1267, 8, ORG]];
    nums(315, m4);
    nums(321.700, m4);

    // бас
    sharp(821, 356);
    b(829, 356, 842, 356, 343);
    q(854, 356, 343);
    b(878, 356, 891, 356, 343);
    q(904, 356, 343);

    sharp(940, 351);
    b(947, 351, 960, 351, 337);
    b(973, 351, 985, 351, 337);
    hq(998, 351, 337);

    sharp(1060, 351);
    b(1067, 351, 1080, 351, 337);
    q(1093, 351, 337);
    b(1118, 351, 1130, 351, 337);
    q(1142, 351, 337);

    d(1181, 345, 362);
    d(1201, 345, 362);
    line(1178, 362, 1199, 362, 2.300);
    rest(1222, 350);
    d(1243, 345, 361);
    d(1264, 345, 361, true);

    nums(391, [[828, 1], [841, 1], [854, 1], [879, 1], [891, 1], [904, 1]]);
    nums(384, [[947, 1], [960, 1], [973, 1], [985, 1], [998, 1]]);
    nums(384, [[1067, 1], [1080, 1], [1093, 1]]);
    nums(391, [[1118, 3, BLU], [1130, 3, BLU], [1142, 3, BLU]]);
    nums(384, [[1181, 3, ORG], [1202, 3, BLU], [1244, 3, BLU], [1265, 3, ORG]]);

    // ударные
    drumBar([[828, 842], [851, 865], [876, 890], [902, 916]]);
    drumBar([[947, 960], [972, 985], [997, 1010], [1022, 1035]]);
    drumBar([[1067, 1080], [1094, 1106], [1118, 1130], [1143, 1155]]);
    drumBar([[1179, 1201], [1222, 1244], [1264, 1285], [1306, 1328]]);
    line(1328, 441, 1338, 441, 1);
    line(1328, 437.500, 1338, 437.500, 2);
    line(1338, 415, 1338, 441, 1.300);
    head(1341, 422);
    line(826, 411, 831, 411, 0.800, '#555');

    document.getElementById('score2').innerHTML = svg;
}

buildMixer();
page1();
page2();
```
